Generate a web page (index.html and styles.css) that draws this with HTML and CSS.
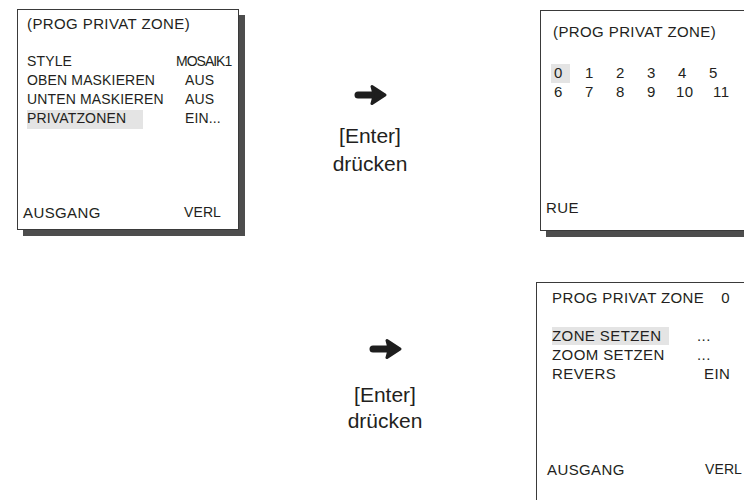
FILE: index.html
```html
<!DOCTYPE html>
<html lang="de">
<head>
    <meta charset="UTF-8">
    <meta name="viewport" content="width=device-width, initial-scale=1.0">
    <title>Privatzonen</title>
    <link rel="stylesheet" href="styles.css">
</head>
<body>

<div class="page">
    <div class="row row-top">
        <!-- Hauptmenue -->
        <div class="screen screen-main">
            <div class="screen-title">(PROG PRIVAT ZONE)</div>
            <div class="menu">
                <div class="menu-row"><span class="menu-label">STYLE</span><span class="menu-value value-wide">MOSAIK1</span></div>
                <div class="menu-row"><span class="menu-label">OBEN MASKIEREN</span><span class="menu-value">AUS</span></div>
                <div class="menu-row"><span class="menu-label">UNTEN MASKIEREN</span><span class="menu-value">AUS</span></div>
                <div class="menu-row"><span class="menu-label"><span class="sel">PRIVATZONEN</span></span><span class="menu-value">EIN...</span></div>
            </div>
            <div class="screen-foot"><span class="foot-left">AUSGANG</span><span class="foot-right">VERL</span></div>
        </div>

        <div class="step step-first">
            <svg class="step-arrow" viewBox="0 0 34 22">
                <rect x="1.5" y="7.5" width="22" height="7" rx="3.5" fill="#1e1e1e"/>
                <path d="M19 2.5 Q22 11 19 19.5 L32 11 Z" fill="#1e1e1e" stroke="#1e1e1e" stroke-width="3" stroke-linejoin="round"/>
            </svg>
            <div class="step-text">[Enter]<br>drücken</div>
        </div>

        <!-- Zonenauswahl -->
        <div class="screen screen-zones">
            <div class="screen-title">(PROG PRIVAT ZONE)</div>
            <div class="zone-grid">
                <span><span class="sel">0</span></span>
                <span>1</span>
                <span>2</span>
                <span>3</span>
                <span>4</span>
                <span>5</span>
                <span>6</span>
                <span>7</span>
                <span>8</span>
                <span>9</span>
                <span class="n-10">10</span>
                <span class="n-11">11</span>
            </div>
            <div class="screen-foot"><span>RUE</span></div>
        </div>
    </div>

    <div class="row row-bottom">
        <div class="step step-second">
            <svg class="step-arrow" viewBox="0 0 34 22">
                <rect x="1.5" y="7.5" width="22" height="7" rx="3.5" fill="#1e1e1e"/>
                <path d="M19 2.5 Q22 11 19 19.5 L32 11 Z" fill="#1e1e1e" stroke="#1e1e1e" stroke-width="3" stroke-linejoin="round"/>
            </svg>
            <div class="step-text">[Enter]<br>drücken</div>
        </div>

        <!-- Zone einstellen -->
        <div class="screen screen-setup">
            <div class="screen-title">PROG PRIVAT ZONE<span class="title-num">0</span></div>
            <div class="menu">
                <div class="menu-row"><span class="menu-label"><span class="sel">ZONE SETZEN</span></span><span class="menu-value">...</span></div>
                <div class="menu-row"><span class="menu-label">ZOOM SETZEN</span><span class="menu-value">...</span></div>
                <div class="menu-row"><span class="menu-label">REVERS</span><span class="menu-value value-shift">EIN</span></div>
            </div>
            <div class="screen-foot"><span class="foot-left">AUSGANG</span><span class="foot-right">VERL</span></div>
        </div>
    </div>
</div>

</body>
</html>
```

FILE: styles.css
```css
body {
    margin: 0;
    padding: 0;
    font-family: "Liberation Sans", Arial, sans-serif;
    color: #231f20;
    background-color: #fff;
}
.page {
    width: 744px;
    height: 500px;
    overflow: hidden;
}
.row {
    display: flex;
    align-items: flex-start;
}
.row-top {
    padding-top: 9px;
}
.row-bottom {
    margin-top: 51px;
}

/* Bildschirm-Kaesten */
.screen {
    flex: none;
    box-sizing: border-box;
    width: 222px;
    height: 221px;
    border: 1px solid #3a3a3a;
    box-shadow: 6px 6px 0 #4d4d4d;
    background-color: #fff;
    display: flex;
    flex-direction: column;
    font-size: 15px;
    line-height: 19px;
    letter-spacing: 0.4px;
}
.menu {
    margin-top: 19px;
}
.menu-row {
    display: flex;
}
.sel {
    background-color: #e4e4e4;
}
.screen-foot {
    margin-top: auto;
    display: flex;
}
.foot-right {
    font-size: 14px;
    letter-spacing: 0.1px;
}

.screen-main {
    margin-left: 17px;
}
.screen-main .screen-title {
    padding: 4px 0 0 9px;
}
.screen-main .menu {
    padding-left: 9px;
    font-size: 14px;
    letter-spacing: 0.15px;
}
.screen-main .menu-label {
    width: 158px;
}
.screen-main .sel {
    padding: 0 17px 3px 0;
}
.value-wide {
    margin-left: -9px;
    letter-spacing: -1px;
}
.screen-main .screen-foot {
    padding: 0 0 7px 5px;
}
.screen-main .foot-left {
    width: 161px;
}

.screen-zones {
    margin-left: 100px;
    margin-top: 1px;
}
.screen-zones .screen-title {
    padding: 11px 0 0 12px;
}
.zone-grid {
    display: grid;
    grid-template-columns: repeat(6, 31px);
    margin-top: 22px;
    padding-left: 13px;
}
.zone-grid .sel {
    padding: 0 7px 2px 3px;
    margin-left: -3px;
}
.zone-grid .n-10 {
    margin-left: -2px;
}
.zone-grid .n-11 {
    margin-left: 4px;
}
.screen-zones .screen-foot {
    padding: 0 0 13px 5px;
}

.screen-setup {
    margin-left: 81px;
}
.screen-setup .screen-title {
    padding: 5px 0 0 15px;
}
.title-num {
    margin-left: 17px;
}
.screen-setup .menu {
    padding-left: 15px;
}
.screen-setup .menu-label {
    width: 145px;
}
.screen-setup .sel {
    padding: 0 8px 1px 0;
}
.value-shift {
    margin-left: 7px;
}
.screen-setup .screen-foot {
    padding: 0 0 23px 10px;
}
.screen-setup .foot-left {
    width: 158px;
}

/* Pfeil mit Hinweis */
.step {
    flex: none;
    width: 140px;
    display: flex;
    flex-direction: column;
    align-items: center;
    text-align: center;
    font-size: 21px;
    color: #231f20;
}
.step-arrow {
    display: block;
    width: 34px;
    height: 22px;
}
.step-first {
    margin-left: 61px;
    margin-top: 75px;
    line-height: 28px;
}
.step-first .step-text {
    margin-top: 16px;
}
.step-second {
    margin-left: 315px;
    margin-top: 56px;
    line-height: 26px;
}
.step-second .step-text {
    margin-top: 22px;
}
```
